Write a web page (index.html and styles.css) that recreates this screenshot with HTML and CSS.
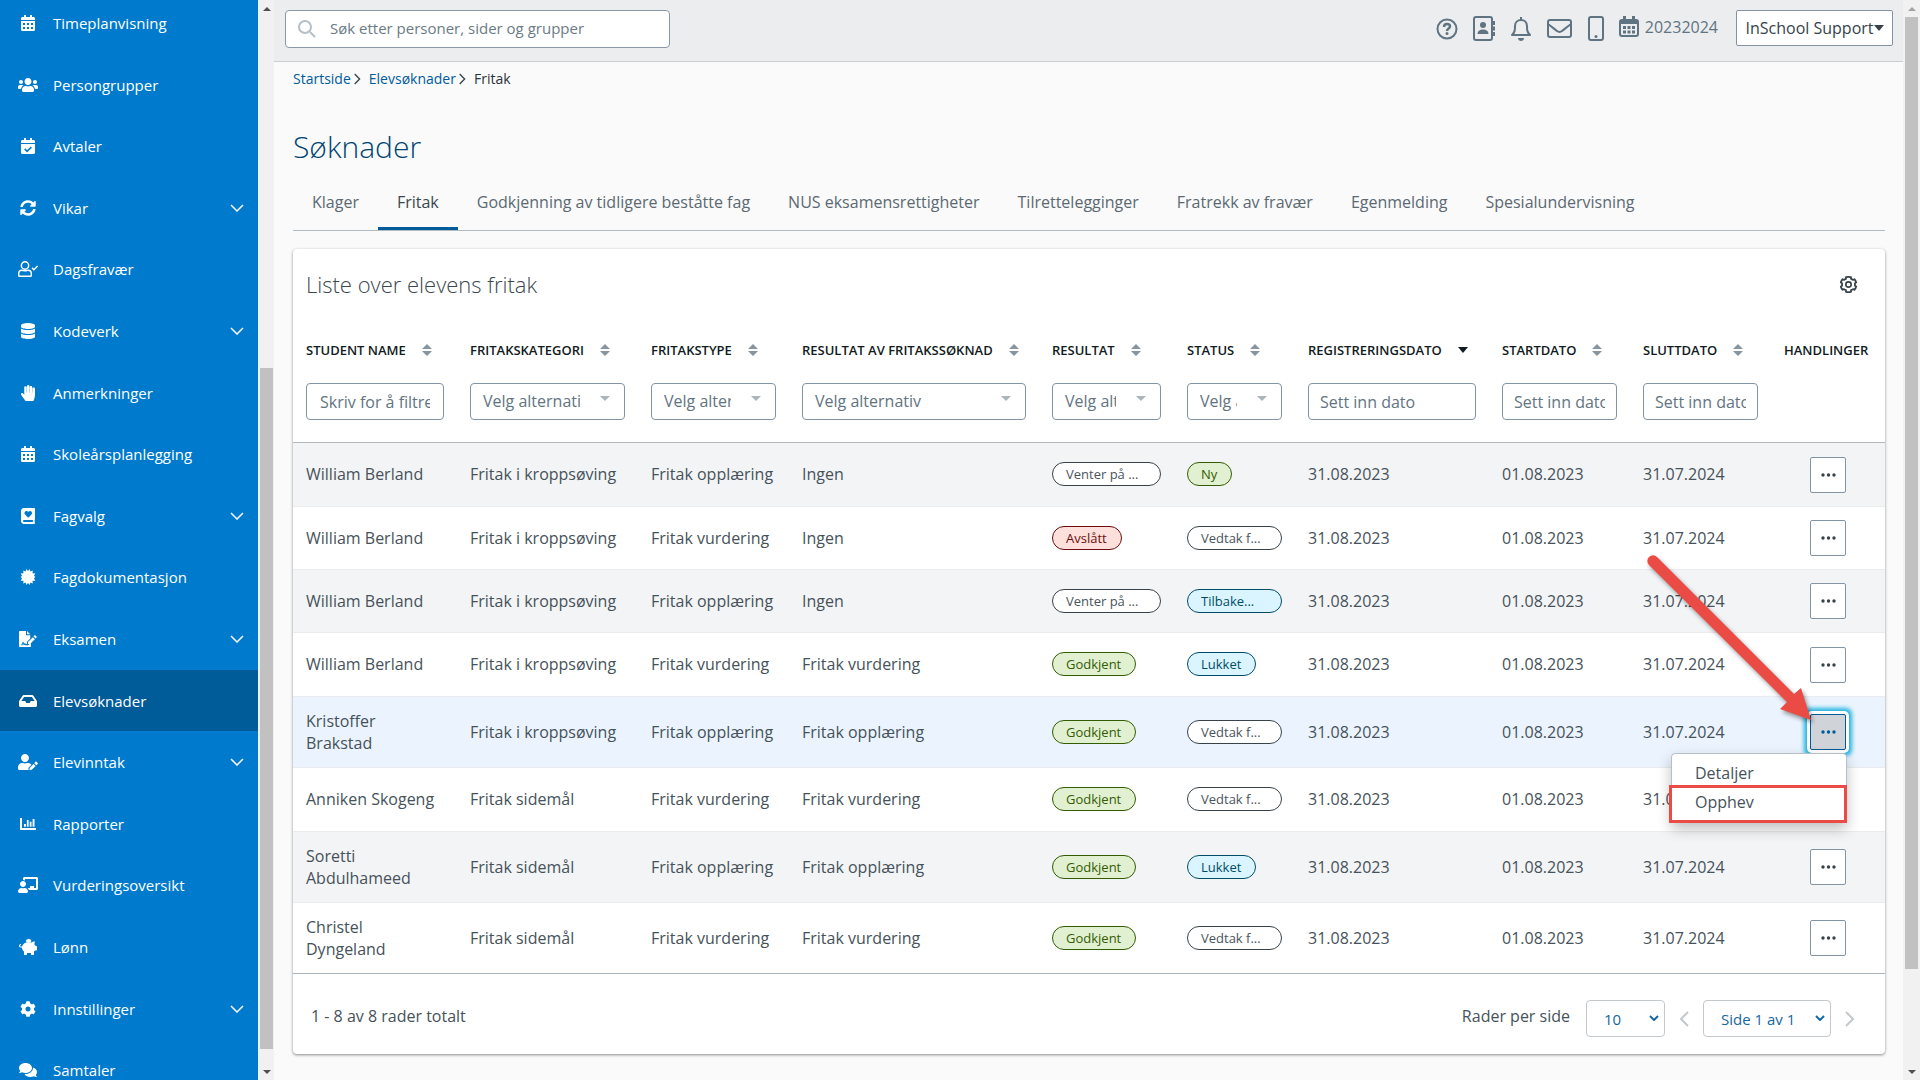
FILE: index.html
```html
<!DOCTYPE html>
<html lang="no">
<head>
<meta charset="utf-8">
<meta name="viewport" content="width=device-width, initial-scale=1">
<title>Søknader – Fritak</title>
<link rel="stylesheet" href="styles.css">
</head>
<body>
<svg class="sprite" aria-hidden="true">
  <symbol id="i-calendar" viewBox="0 0 448 512"><path fill-rule="evenodd" d="M0 464c0 26.500 21.500 48 48 48h352c26.500 0 48-21.500 48-48V192H0zM64 256h64v64H64zm128 0h64v64h-64zm128 0h64v64h-64zM64 384h64v64H64zm128 0h64v64h-64zm128 0h64v64h-64zM400 64h-48V16c0-9-7-16-16-16h-32c-9 0-16 7-16 16v48H160V16c0-9-7-16-16-16h-32c-9 0-16 7-16 16v48H48C21 64 0 85 0 112v48h448v-48c0-27-21-48-48-48z"/></symbol>
  <symbol id="i-users" viewBox="0 0 640 512"><path d="M96 224c35.300 0 64-28.700 64-64s-28.700-64-64-64-64 28.700-64 64 28.700 64 64 64zm448 0c35.300 0 64-28.700 64-64s-28.700-64-64-64-64 28.700-64 64 28.700 64 64 64zm32 32h-64c-17.600 0-33.500 7.100-45.100 18.600 40.300 22.100 68.900 62 75.100 109.400h66c17.700 0 32-14.300 32-32v-32c0-35.300-28.700-64-64-64zm-256 0c61.900 0 112-50.100 112-112S381.900 32 320 32 208 82.100 208 144s50.100 112 112 112zm76.800 32h-8.300c-20.800 10-43.900 16-68.500 16s-47.600-6-68.500-16h-8.300C179.600 288 128 339.600 128 403.200V432c0 26.500 21.500 48 48 48h288c26.500 0 48-21.500 48-48v-28.800c0-63.600-51.600-115.200-115.200-115.200zm-223.700-13.400C161.500 263.100 145.600 256 128 256H64c-35.300 0-64 28.700-64 64v32c0 17.700 14.300 32 32 32h65.900c6.300-47.400 34.900-87.300 75.200-109.400z"/></symbol>
  <symbol id="i-calcheck" viewBox="0 0 448 512"><path d="M0 464c0 26 22 48 48 48h352c26 0 48-22 48-48V192H0zM400 64h-48V16c0-9-7-16-16-16h-32c-9 0-16 7-16 16v48H160V16c0-9-7-16-16-16h-32c-9 0-16 7-16 16v48H48C21 64 0 85 0 112v48h448v-48c0-27-21-48-48-48z"/><path d="M120 350l75 75 135-135" fill="none" stroke="#007acc" stroke-width="52"/></symbol>
  <symbol id="i-sync" viewBox="0 0 512 512"><path d="M370.720 133.280C339.458 104.008 298.888 87.962 255.848 88c-77.458.068-144.328 53.178-162.791 126.850-1.344 5.363-6.122 9.150-11.651 9.150H24.103c-7.498 0-13.194-6.807-11.807-14.176C33.933 94.924 134.813 8 256 8c66.448 0 126.791 26.136 171.315 68.685L463.030 40.970C478.149 25.851 504 36.559 504 57.941V192c0 13.255-10.745 24-24 24H345.941c-21.382 0-32.090-25.851-16.971-40.971l41.750-41.749zM32 296h134.059c21.382 0 32.090 25.851 16.971 40.971l-41.750 41.750c31.262 29.273 71.835 45.319 114.876 45.280 77.418-.07 144.315-53.144 162.787-126.849 1.344-5.363 6.122-9.150 11.651-9.150h57.304c7.498 0 13.194 6.807 11.807 14.176C478.067 417.076 377.187 504 256 504c-66.448 0-126.791-26.136-171.315-68.685L48.970 471.030C33.851 486.149 8 475.441 8 454.059V320c0-13.255 10.745-24 24-24z"/></symbol>
  <symbol id="i-usercheck" viewBox="0 0 640 512"><g fill="none" stroke="currentColor" stroke-width="46"><circle cx="224" cy="144" r="118"/><path d="M128 296c-60 0-105 48-105 104v62c0 14 10 27 27 27h348c17 0 27-13 27-27v-62c0-56-45-104-105-104-30 0-50 16-96 16s-66-16-96-16z"/><path d="M450 220l60 60 116-124"/></g></symbol>
  <symbol id="i-database" viewBox="0 0 448 512"><path d="M448 73v46c0 40-100 73-224 73S0 159 0 119V73C0 33 100 0 224 0s224 33 224 73zM448 176v103c0 40-100 73-224 73S0 319 0 279V176c48 33 136 49 224 49s176-16 224-49zm0 160v103c0 40-100 73-224 73S0 479 0 439V336c48 33 136 49 224 49s176-16 224-49z"/></symbol>
  <symbol id="i-hand" viewBox="0 0 448 512"><path d="M408 80c-22 0-40 18-40 41v127h-8V73c0-23-18-41-40-41s-40 18-40 41v175h-8V42c0-23-18-42-40-42s-40 19-40 42v206h-8V83c0-23-18-41-40-41s-40 18-40 41v233l-31-44c-13-18-38-22-56-9s-22 39-9 57l124 174c8 11 20 18 34 18h208c20 0 37-14 41-33l26-115c4-13 7-27 7-41V121c0-23-18-41-40-41z"/></symbol>
  <symbol id="i-book" viewBox="0 0 448 512"><path fill-rule="evenodd" d="M448 360V24c0-13-11-24-24-24H96C43 0 0 43 0 96v320c0 53 43 96 96 96h328c13 0 24-11 24-24v-16c0-8-4-14-9-18-4-16-4-60 0-75 5-4 9-11 9-19zM134 109c26-22 64-18 88 6l10 10 9-10c24-24 63-28 89-6 30 25 31 70 5 97l-92 95c-6 6-16 6-22 0l-92-95c-26-27-25-72 5-97zM381 448H96c-42 0-42-64 0-64h285c-2 17-2 47 0 64z"/></symbol>
  <symbol id="i-cert" viewBox="0 0 512 512"><path d="M256 62L311 0l20 82 79-32-10 88 92 2-46 78 46 38-46 38 46 78-92 2 10 88-79-32-20 82-55-62-55 62-20-82-79 32 10-88-92-2 46-78-46-38 46-38-46-78 92-2-10-88 79 32L201 0z"/></symbol>
  <symbol id="i-sign" viewBox="0 0 576 512"><path d="M24 0h200v136h136v100L256 340v76h-34c-12-28-42-32-60-14l-16-46c-5-14-28-14-32 0l-22 66H70v30h40l20-50 16 42c4 10 20 12 24 2 8-14 26-8 28 12h98l88-80v110c0 13-11 24-24 24H24c-13 0-24-11-24-24V24C0 11 11 0 24 0zm232 0l104 104H256z"/><path d="M288 353v63h63l156-156-63-63zM560 174l-31-31c-13-12-30-12-42 0l-26 27 68 69 31-27c9-10 9-28 0-38z"/></symbol>
  <symbol id="i-inbox" viewBox="0 0 576 512"><path fill-rule="evenodd" d="M568 244L462 85c-9-13-24-21-40-21H154c-16 0-31 8-40 21L8 244c-5 8-8 17-8 27v129c0 27 21 48 48 48h480c27 0 48-21 48-48V271c0-10-3-19-8-27zM162 128h252l85 128H376l-32 64H232l-32-64H77z"/></symbol>
  <symbol id="i-useredit" viewBox="0 0 640 512"><path d="M224 256c71 0 128-57 128-128S295 0 224 0 96 57 96 128s57 128 128 128zm90 32h-17c-44 21-102 21-146 0h-17C60 288 0 348 0 422v42c0 27 22 48 48 48h286l6-78 92-92c-24-32-68-54-118-54zM376 440l-8 64c-1 5 3 9 8 8l66-8 122-122-66-64zM630 286l-40-38c-10-10-26-10-36 0l-32 46 64 64 44-36c10-10 10-26 0-36z"/></symbol>
  <symbol id="i-chart" viewBox="0 0 512 512"><path d="M0 64h64v320h448v64H24c-13 0-24-11-24-24zM128 256h60v84h-60zM220 128h56v212h-56zM312 186h56v154h-56zM404 92h60v248h-60z"/></symbol>
  <symbol id="i-teacher" viewBox="0 0 640 512"><path d="M208 352c-36 14-58 14-96 0C50 352 0 403 0 466c0 26 21 46 46 46h228c25 0 46-20 46-46 0-63-50-114-112-114zm-48-32c53 0 96-43 96-96s-43-96-96-96-96 43-96 96 43 96 96 96z"/><path d="M592 0H208c-26 0-48 22-48 49v47c24 0 45 6 64 17V64h352v288h-64v-64H384v64h-76c20 17 34 39 42 64h242c26 0 48-22 48-49V49c0-27-22-49-48-49z"/></symbol>
  <symbol id="i-pig" viewBox="0 0 576 512"><ellipse cx="308" cy="62" rx="88" ry="62"/><path d="M560 224h-30c-9-22-23-41-40-57l22-87h-32c-29 0-55 14-73 35-8-1-15-3-23-3H256c-77 0-142 55-157 128H56c-15 0-27-14-23-29 2-11 13-19 25-19 3 0 6-3 6-6v-20c0-3-3-6-6-6-28 0-54 20-58 48-5 34 22 64 56 64h40c0 52 25 98 64 128v96c0 9 7 16 16 16h64c9 0 16-7 16-16v-48h128v48c0 9 7 16 16 16h64c9 0 16-7 16-16v-96c12-9 22-20 31-32h49c9 0 16-7 16-16V240c0-9-7-16-16-16z"/></symbol>
  <symbol id="i-cog" viewBox="0 0 512 512"><path fill-rule="evenodd" d="M487 316l-42-25c4-23 4-47 0-70l42-25c5-3 7-8 6-14-11-35-30-67-55-94-4-4-10-5-15-2l-42 24c-18-15-39-27-61-35V26c0-6-4-11-9-12-37-8-75-8-110 0-5 1-9 6-9 12v49c-22 8-43 20-61 35L89 86c-5-3-11-2-15 2-25 27-44 59-55 94-2 6 0 12 5 14l43 25c-4 23-4 47 0 70l-43 25c-4 3-7 8-5 14 11 35 30 67 55 94 4 4 10 5 15 2l42-24c18 15 39 27 61 35v49c0 6 4 11 9 12 37 8 75 8 110 0 5-1 9-6 9-12v-49c22-8 43-20 61-35l42 24c5 3 11 2 15-2 25-27 44-59 55-94 1-6-1-11-6-14zM256 336a80 80 0 1 1 0-160 80 80 0 0 1 0 160z"/></symbol>
  <symbol id="i-chat" viewBox="0 0 576 512"><path d="M416 192c0-88-93-160-208-160S0 104 0 192c0 34 14 66 38 92-13 30-36 54-36 54-5 6-2 14 6 14 37 0 67-12 89-25 32 16 70 25 111 25 115 0 208-72 208-160zm122 220c24-26 38-58 38-92 0-67-53-124-129-148 1 7 1 13 1 20 0 106-108 192-240 192-11 0-21-1-32-2 32 58 106 98 192 98 41 0 79-9 111-25 22 13 52 25 89 25 7 0 11-9 6-14 0 0-23-24-36-54z"/></symbol>
  <symbol id="i-down" viewBox="0 0 14 8"><path d="M1 1l6 6 6-6" fill="none" stroke="currentColor" stroke-width="1.500"/></symbol>
  <symbol id="i-sort" viewBox="0 0 10 12"><path d="M5 0l5 5H0zM5 12l5-5H0z"/></symbol>
  <symbol id="i-caret" viewBox="0 0 10 6"><path d="M0 0h10L5 6z"/></symbol>
  <symbol id="i-dots" viewBox="0 0 15 4"><circle cx="2" cy="2" r="1.700"/><circle cx="7.500" cy="2" r="1.700"/><circle cx="13" cy="2" r="1.700"/></symbol>
  <symbol id="i-next" viewBox="0 0 10 16"><path d="M1 1l7 7-7 7" fill="none" stroke="currentColor" stroke-width="2"/></symbol>
  <symbol id="i-prev" viewBox="0 0 10 16"><path d="M9 1L2 8l7 7" fill="none" stroke="currentColor" stroke-width="2"/></symbol>
</svg>

<div class="app">
  <nav class="sidebar" aria-label="Hovedmeny">
    <ul class="menu">
      <li><a href="#"><svg><use href="#i-calendar"/></svg>Timeplanvisning</a></li>
      <li><a href="#"><svg><use href="#i-users"/></svg>Persongrupper</a></li>
      <li><a href="#"><svg><use href="#i-calcheck"/></svg>Avtaler</a></li>
      <li><a href="#"><svg><use href="#i-sync"/></svg>Vikar<svg class="chev"><use href="#i-down"/></svg></a></li>
      <li><a href="#"><svg><use href="#i-usercheck"/></svg>Dagsfravær</a></li>
      <li><a href="#"><svg><use href="#i-database"/></svg>Kodeverk<svg class="chev"><use href="#i-down"/></svg></a></li>
      <li><a href="#"><svg><use href="#i-hand"/></svg>Anmerkninger</a></li>
      <li><a href="#"><svg><use href="#i-calendar"/></svg>Skoleårsplanlegging</a></li>
      <li><a href="#"><svg><use href="#i-book"/></svg>Fagvalg<svg class="chev"><use href="#i-down"/></svg></a></li>
      <li><a href="#"><svg><use href="#i-cert"/></svg>Fagdokumentasjon</a></li>
      <li><a href="#"><svg><use href="#i-sign"/></svg>Eksamen<svg class="chev"><use href="#i-down"/></svg></a></li>
      <li><a class="current" href="#"><svg><use href="#i-inbox"/></svg>Elevsøknader</a></li>
      <li><a href="#"><svg><use href="#i-useredit"/></svg>Elevinntak<svg class="chev"><use href="#i-down"/></svg></a></li>
      <li><a href="#"><svg><use href="#i-chart"/></svg>Rapporter</a></li>
      <li><a href="#"><svg><use href="#i-teacher"/></svg>Vurderingsoversikt</a></li>
      <li><a href="#"><svg><use href="#i-pig"/></svg>Lønn</a></li>
      <li><a href="#"><svg><use href="#i-cog"/></svg>Innstillinger<svg class="chev"><use href="#i-down"/></svg></a></li>
      <li><a href="#"><svg><use href="#i-chat"/></svg>Samtaler</a></li>
    </ul>
  </nav>
  <div class="scrollbar scrollbar--menu" aria-hidden="true"><i class="up"></i><div class="track"><b></b></div><i class="dn"></i></div>

  <div class="page">
    <header class="topbar">
      <label class="search">
        <svg viewBox="0 0 18 18"><circle cx="7" cy="7" r="6" fill="none" stroke="currentColor" stroke-width="2"/><path d="M12 12l5 5" stroke="currentColor" stroke-width="2"/></svg>
        <input type="search" aria-label="Søk" placeholder="Søk etter personer, sider og grupper">
      </label>
      <div class="tools">
        <a href="#" aria-label="Hjelp"><svg width="22" height="22" viewBox="0 0 22 22"><g fill="none" stroke="currentColor" stroke-width="2"><circle cx="11" cy="11" r="9.500"/><path d="M8 9c0-2 1-3 3-3s3 1 3 2.500c0 2-3 2-3 4.500" stroke-width="2.500"/></g><circle cx="11" cy="15.500" r="1.500"/></svg></a>
        <a href="#" aria-label="Kontakter"><svg width="22" height="26" viewBox="0 0 22 26"><rect x="1" y="1" width="18" height="23" rx="2" fill="none" stroke="currentColor" stroke-width="2"/><circle cx="10" cy="9" r="3"/><path d="M4.500 18c0-3 2-4.500 5.500-4.500s5.500 1.500 5.500 4.500zM20 5h2v4h-2zM20 10.500h2v4h-2zM20 16h2v4h-2z"/></svg></a>
        <a href="#" aria-label="Varsler"><svg width="22" height="26" viewBox="0 0 22 26"><path d="M2 19c3-3 3-5 3-9 0-4 3-6 6-6s6 2 6 6c0 4 0 6 3 9zM11 1v3" fill="none" stroke="currentColor" stroke-width="2" stroke-linejoin="round"/><path d="M8 22h6c0 4-6 4-6 0z"/></svg></a>
        <a href="#" aria-label="Meldinger"><svg width="26" height="20" viewBox="0 0 26 20"><g fill="none" stroke="currentColor" stroke-width="2"><rect x="1" y="1" width="23" height="17" rx="2"/><path d="M1 5c4 3 7 5.500 9 7 2 1.500 3 1.500 5 0s5-4 9-7"/></g></svg></a>
        <a href="#" aria-label="Mobil"><svg width="16" height="26" viewBox="0 0 16 26"><rect x="1" y="1" width="14" height="23" rx="2" fill="none" stroke="currentColor" stroke-width="2"/><circle cx="8" cy="20.500" r="1.500"/></svg></a>
      </div>
      <a class="year" href="#"><svg width="20" height="22" viewBox="0 0 20 22"><rect x="1" y="4" width="18" height="16" rx="2" fill="none" stroke="currentColor" stroke-width="2"/><path d="M1 4h18v4H1zM4 0h3v4H4zM13 0h3v4h-3zM4 10h3v3H4zM8.500 10h3v3h-3zM13 10h3v3h-3zM4 14.500h3v3H4zM8.500 14.500h3v3h-3zM13 14.500h3v3h-3z"/></svg><span>20232024</span></a>
      <button class="user" type="button">InSchool Support<svg><use href="#i-caret"/></svg></button>
    </header>

    <main class="content">
      <nav class="crumbs" aria-label="Brødsmulesti"><a href="#">Startside</a><svg><use href="#i-next"/></svg><a href="#">Elevsøknader</a><svg><use href="#i-next"/></svg><span>Fritak</span></nav>
      <h1>Søknader</h1>
      <nav class="tabs" aria-label="Søknadstyper">
        <a href="#">Klager</a><a class="on" href="#">Fritak</a><a href="#">Godkjenning av tidligere beståtte fag</a><a href="#">NUS eksamensrettigheter</a><a href="#">Tilrettelegginger</a><a href="#">Fratrekk av fravær</a><a href="#">Egenmelding</a><a href="#">Spesialundervisning</a>
      </nav>

      <section class="card">
        <div class="card-head">
          <h2>Liste over elevens fritak</h2>
          <button class="gear" type="button" aria-label="Innstillinger"><svg viewBox="0 0 512 512"><path d="M464 308l-36-21c4-21 4-41 0-62l36-21c-10-36-26-66-49-92l-37 21c-16-14-33-24-54-31V60c-45-10-91-10-136 0v42c-21 7-38 17-54 31L97 112c-23 26-39 56-49 92l36 21c-4 21-4 41 0 62l-36 21c10 36 26 66 49 92l37-21c16 14 33 24 54 31v42c45 10 91 10 136 0v-42c21-7 38-17 54-31l37 21c23-26 39-56 49-92z" fill="none" stroke="currentColor" stroke-width="48" stroke-linejoin="round"/><circle cx="256" cy="256" r="72" fill="none" stroke="currentColor" stroke-width="44"/></svg></button>
        </div>
        <table>
          <colgroup><col class="c1"><col class="c2"><col class="c3"><col class="c4"><col class="c5"><col class="c6"><col class="c7"><col class="c8"><col class="c8"><col class="c10"></colgroup>
          <thead>
            <tr class="names">
              <th scope="col"><span>STUDENT NAME<svg><use href="#i-sort"/></svg></span></th>
              <th scope="col"><span>FRITAKSKATEGORI<svg><use href="#i-sort"/></svg></span></th>
              <th scope="col"><span>FRITAKSTYPE<svg><use href="#i-sort"/></svg></span></th>
              <th scope="col"><span>RESULTAT AV FRITAKSSØKNAD<svg><use href="#i-sort"/></svg></span></th>
              <th scope="col"><span>RESULTAT<svg><use href="#i-sort"/></svg></span></th>
              <th scope="col"><span>STATUS<svg><use href="#i-sort"/></svg></span></th>
              <th scope="col" aria-sort="descending"><span>REGISTRERINGSDATO<svg class="sorted"><use href="#i-caret"/></svg></span></th>
              <th scope="col"><span>STARTDATO<svg><use href="#i-sort"/></svg></span></th>
              <th scope="col"><span>SLUTTDATO<svg><use href="#i-sort"/></svg></span></th>
              <th scope="col"><span>HANDLINGER</span></th>
            </tr>
            <tr class="filters">
              <td><input type="text" aria-label="Filtrer navn" placeholder="Skriv for å filtrere"></td>
              <td><div class="pick"><select aria-label="Fritakskategori"><option>Velg alternativ</option></select></div></td>
              <td><div class="pick"><select aria-label="Fritakstype"><option>Velg alternativ</option></select></div></td>
              <td><div class="pick"><select aria-label="Resultat av fritakssøknad"><option>Velg alternativ</option></select></div></td>
              <td><div class="pick"><select aria-label="Resultat"><option>Velg alternativ</option></select></div></td>
              <td><div class="pick"><select aria-label="Status"><option>Velg alternativ</option></select></div></td>
              <td><input class="date" type="text" aria-label="Registreringsdato" placeholder="Sett inn dato"></td>
              <td><input class="date" type="text" aria-label="Startdato" placeholder="Sett inn dato"></td>
              <td><input class="date" type="text" aria-label="Sluttdato" placeholder="Sett inn dato"></td>
              <td></td>
            </tr>
          </thead>
          <tbody>
            <tr><td>William Berland</td><td>Fritak i kroppsøving</td><td>Fritak opplæring</td><td>Ingen</td><td><span class="pill wide">Venter på ...</span></td><td><span class="pill green">Ny</span></td><td>31.08.2023</td><td>01.08.2023</td><td>31.07.2024</td><td class="act"><button class="more" type="button" aria-label="Handlinger"><svg><use href="#i-dots"/></svg></button></td></tr>
            <tr><td>William Berland</td><td>Fritak i kroppsøving</td><td>Fritak vurdering</td><td>Ingen</td><td><span class="pill red">Avslått</span></td><td><span class="pill wide">Vedtak f...</span></td><td>31.08.2023</td><td>01.08.2023</td><td>31.07.2024</td><td class="act"><button class="more" type="button" aria-label="Handlinger"><svg><use href="#i-dots"/></svg></button></td></tr>
            <tr><td>William Berland</td><td>Fritak i kroppsøving</td><td>Fritak opplæring</td><td>Ingen</td><td><span class="pill wide">Venter på ...</span></td><td><span class="pill blue wide">Tilbake...</span></td><td>31.08.2023</td><td>01.08.2023</td><td>31.07.2024</td><td class="act"><button class="more" type="button" aria-label="Handlinger"><svg><use href="#i-dots"/></svg></button></td></tr>
            <tr><td>William Berland</td><td>Fritak i kroppsøving</td><td>Fritak vurdering</td><td>Fritak vurdering</td><td><span class="pill green">Godkjent</span></td><td><span class="pill blue">Lukket</span></td><td>31.08.2023</td><td>01.08.2023</td><td>31.07.2024</td><td class="act"><button class="more" type="button" aria-label="Handlinger"><svg><use href="#i-dots"/></svg></button></td></tr>
            <tr class="chosen"><td>Kristoffer Brakstad</td><td>Fritak i kroppsøving</td><td>Fritak opplæring</td><td>Fritak opplæring</td><td><span class="pill green">Godkjent</span></td><td><span class="pill wide">Vedtak f...</span></td><td>31.08.2023</td><td>01.08.2023</td><td>31.07.2024</td><td class="act"><div class="anchor">
              <button class="more open" type="button" aria-label="Handlinger" aria-expanded="true"><svg><use href="#i-dots"/></svg></button>
              <div class="dropdown"><button type="button">Detaljer</button><button class="marked" type="button">Opphev</button></div>
              <svg class="arrow" viewBox="0 0 176 176" aria-hidden="true"><path d="M4 12a5 5 0 0 1 8-8l137 137 7-6 10 32-31-11 7-7z"/></svg>
            </div></td></tr>
            <tr><td>Anniken Skogeng</td><td>Fritak sidemål</td><td>Fritak vurdering</td><td>Fritak vurdering</td><td><span class="pill green">Godkjent</span></td><td><span class="pill wide">Vedtak f...</span></td><td>31.08.2023</td><td>01.08.2023</td><td>31.07.2024</td><td class="act"><button class="more" type="button" aria-label="Handlinger"><svg><use href="#i-dots"/></svg></button></td></tr>
            <tr><td>Soretti Abdulhameed</td><td>Fritak sidemål</td><td>Fritak opplæring</td><td>Fritak opplæring</td><td><span class="pill green">Godkjent</span></td><td><span class="pill blue">Lukket</span></td><td>31.08.2023</td><td>01.08.2023</td><td>31.07.2024</td><td class="act"><button class="more" type="button" aria-label="Handlinger"><svg><use href="#i-dots"/></svg></button></td></tr>
            <tr><td>Christel Dyngeland</td><td>Fritak sidemål</td><td>Fritak vurdering</td><td>Fritak vurdering</td><td><span class="pill green">Godkjent</span></td><td><span class="pill wide">Vedtak f...</span></td><td>31.08.2023</td><td>01.08.2023</td><td>31.07.2024</td><td class="act"><button class="more" type="button" aria-label="Handlinger"><svg><use href="#i-dots"/></svg></button></td></tr>
          </tbody>
        </table>
        <footer class="pager">
          <span class="total">1 - 8 av 8 rader totalt</span>
          <label for="rows">Rader per side</label>
          <div class="sel sel--rows"><select id="rows"><option>10</option></select><svg viewBox="0 0 10 6"><path d="M1 1l4 4 4-4" fill="none" stroke="currentColor" stroke-width="2"/></svg></div>
          <button type="button" aria-label="Forrige side"><svg><use href="#i-prev"/></svg></button>
          <div class="sel sel--page"><select aria-label="Side"><option>Side 1 av 1</option></select><svg viewBox="0 0 10 6"><path d="M1 1l4 4 4-4" fill="none" stroke="currentColor" stroke-width="2"/></svg></div>
          <button type="button" aria-label="Neste side"><svg><use href="#i-next"/></svg></button>
        </footer>
      </section>
    </main>
  </div>
  <div class="scrollbar scrollbar--page" aria-hidden="true"><i class="up"></i><div class="track"><b></b></div><i class="dn"></i></div>
</div>
</body>
</html>
```
FILE: styles.css
```css
* { box-sizing: border-box; }
html, body { height: 100%; margin: 0; }
body { font-family: "Open Sans", "Noto Sans", sans-serif; font-size: 16px; line-height: 22px; color: #46525a; background: #fafafa; overflow: hidden; }
a { color: inherit; text-decoration: none; }
button, input, select { font: inherit; color: inherit; margin: 0; }
svg { display: block; fill: currentColor; flex: none; }
.sprite { position: absolute; width: 0; height: 0; }
.app { display: flex; height: 100vh; }

/* side menu, scrolled partly down */
.sidebar { flex: 0 0 258px; overflow: hidden; background: #007acc; color: #fff; }
.menu { list-style: none; margin: -8px 0 0; padding: 0; }
.menu li { height: 62px; }
.menu li:nth-child(5n+2), .menu li:nth-child(5n+4) { height: 61px; }
.menu a { display: flex; align-items: center; gap: 15px; height: 100%; padding: 0 14px 0 18px; font-weight: 500; font-size: 15px; }
.menu svg { width: 20px; height: 16px; }
.menu .chev { width: 14px; height: 8px; margin-left: auto; }
.menu .current { background: #005b99; }

.scrollbar { flex: none; display: flex; flex-direction: column; background: #f1f1f1; }
.scrollbar--menu { width: 16px; padding: 0 1px 0 2px; }
.scrollbar--page { width: 17px; padding: 0 2px; }
.scrollbar i { height: 17px; display: grid; place-items: center; }
.scrollbar i::before { content: ""; border: 4px solid transparent; }
.scrollbar .up::before { border-bottom-color: #505050; border-top: 0; }
.scrollbar .dn::before { border-top-color: #505050; border-bottom: 0; }
.scrollbar--page .up::before { border-bottom-color: #a3a3a3; }
.track { flex: 1; display: flex; flex-direction: column; }
.track b { display: block; background: #c1c1c1; height: 66%; }
.scrollbar--menu .track { justify-content: flex-end; padding-bottom: 14px; }
.scrollbar--page .track b { height: 91%; }

.page { flex: 1; min-width: 0; }
.topbar { display: flex; align-items: flex-start; height: 62px; padding: 10px 10px 0 11px; background: #ecedef; border-bottom: 1px solid #c9ced3; }
.search { display: flex; align-items: center; flex: 0 0 385px; height: 38px; padding: 0 12px; gap: 14px; background: #fff; border: 1px solid #8a99a8; border-radius: 4px; color: #b5bfc6; }
.search svg { width: 18px; height: 18px; }
.search input { flex: 1; border: 0; outline: 0; padding: 0 0 2px; background: none; font-size: 15px; }
.search input::placeholder { color: #6b7b86; opacity: 1; }
.tools { display: flex; align-items: center; height: 38px; margin-left: auto; color: #5f7482; }
.tools a { margin-right: 15px; }
.year { display: flex; gap: 6px; align-items: center; height: 34px; color: #5f7482; font-weight: 500; margin-right: 18px; }
.user { display: flex; align-items: center; justify-content: center; width: 157px; height: 36px; padding: 0; background: #fff; border: 1px solid #8394a5; border-radius: 2px; font-weight: 500; color: #37424a; white-space: nowrap; }
.user svg { width: 10px; height: 6px; }

.content { padding: 0 18px 0 19px; }
.crumbs { display: flex; align-items: center; height: 34px; font-size: 14px; color: #005b99; }
.crumbs svg { width: 7px; height: 12px; margin: 0 8px 0 3px; color: #3a474f; }
.crumbs span { font-weight: 500; color: #2a343a; }
h1 { margin: 29px 0 7px; font-size: 30px; line-height: 44px; font-weight: 300; color: #004574; }
.tabs { display: flex; height: 55px; border-bottom: 1px solid #b0bac1; color: #5b6973; }
.tabs a { display: flex; align-items: center; padding: 0 19px; border-bottom: 3px solid transparent; white-space: nowrap; }
.tabs .on { border-color: #005b99; color: #3a474f; }

.card { margin-top: 18px; background: #fff; border-radius: 4px; box-shadow: 0 1px 3px rgba(0, 0, 0, .45); }
.card-head { display: flex; align-items: center; justify-content: space-between; height: 72px; padding: 0 27px 2px 13px; }
h2 { margin: 0; font-size: 22px; line-height: 30px; font-weight: 300; color: #3a474f; }
.gear { border: 0; background: none; padding: 0; color: #37424a; }
.gear svg { width: 19px; height: 19px; }

table { width: 100%; table-layout: fixed; border-collapse: separate; border-spacing: 0; }
.c1 { width: 164px; } .c2 { width: 181px; } .c3 { width: 151px; } .c4 { width: 250px; } .c5 { width: 135px; }
.c6 { width: 121px; } .c7 { width: 194px; } .c8 { width: 141px; } .c10 { width: 114px; }
th, td { padding: 0 13px; text-align: left; }
.names th { height: 58px; font-size: 13px; font-weight: 600; color: #111b22; white-space: nowrap; }
.names span { display: flex; align-items: center; gap: 16px; }
.names svg { width: 10px; height: 12px; color: #8795a0; }
.names .sorted { width: 10px; height: 6px; color: #111b22; }
.filters td { height: 64px; padding-top: 4px; padding-bottom: 22px; border-bottom: 1px solid #b0b7bd; }
.filters input, .filters select { display: block; width: 100%; height: 37px; border: 1px solid #8394a5; border-radius: 4px; background: #fff; padding: 0 13px; font-weight: 500; color: #62747f; }
.filters .date { padding: 0 11px; }
.filters input::placeholder { color: #62747f; opacity: 1; }
.pick { position: relative; }
.pick select { appearance: none; padding: 0 44px 2px 12px; }
.pick::after { content: ""; position: absolute; right: 15px; top: 13px; border: 5px solid transparent; border-top-color: #aab5bc; border-bottom: 0; }
tbody td { height: 64px; border-bottom: 1px solid #e9ebed; padding-right: 13px; padding-bottom: 1px; }
tbody td:nth-child(2), tbody td:nth-child(3) { white-space: nowrap; }
tbody tr:nth-child(2) td, tbody tr:nth-child(3) td { height: 63px; }
tbody tr:nth-child(5) td, tbody tr:nth-child(7) td, tbody tr:nth-child(8) td { height: 71px; }
tbody tr:nth-child(odd) { background: #f3f4f6; }
tbody tr.chosen { background: #ebf4fe; }
tbody tr:last-child td { border-bottom-color: #aab4bc; }
.pill { display: inline-block; height: 24px; padding: 0 14px 0 13px; border: 1px solid #37424a; border-radius: 12px; background: #fff; font-size: 13px; line-height: 22px; vertical-align: middle; white-space: nowrap; color: #4a545c; }
td > .wide { width: 100%; }
.green { background: #e2f0d2; border-color: #335c00; color: #335c00; }
.red { background: #fde0dc; border-color: #6e0d0d; color: #6e0d0d; }
.blue { background: #daf5ff; border-color: #004c66; color: #004c66; }
tbody .act { padding: 0 0 0 39px; }
.more { display: grid; place-items: center; width: 36px; height: 36px; padding: 0; background: #fff; border: 1px solid #8394a5; border-radius: 2px; color: #37424a; }
.more svg { width: 15px; height: 4px; }
.open { background: #d0d4d9; border-color: #005b99; color: #005b99; box-shadow: 0 0 0 3px #fff, 0 0 4px 6px #25b4e0; }
.anchor { position: relative; width: 36px; }
.dropdown { position: absolute; z-index: 2; top: 39px; right: -1px; width: 176px; padding-top: 4px; background: #fff; border: 1px solid #b5bfc6; border-radius: 4px; box-shadow: 0 6px 14px rgba(0, 0, 0, .25); }
.dropdown button { display: block; width: 100%; height: 30px; padding: 0 23px; border: 0; background: none; text-align: left; }
.dropdown .marked { position: relative; width: 178px; height: 38px; margin: -3px 0 -1px -3px; padding-bottom: 4px; border: 3px solid #ea4b44; }
.arrow { position: absolute; z-index: 3; width: 176px; height: 176px; left: -165px; top: -161px; fill: #ea4b44; filter: drop-shadow(2px 3px 2px rgba(0, 0, 0, .4)); pointer-events: none; }

.pager { display: flex; align-items: center; height: 80px; padding: 9px 30px 0 18px; }
.total { margin-right: auto; padding-bottom: 6px; }
.pager label { padding-bottom: 6px; margin-right: 16px; }
.sel { position: relative; height: 37px; color: #16679f; }
.sel select { appearance: none; width: 100%; height: 100%; border: 1px solid #c3c8cc; border-radius: 4px; background: #fff; padding: 0 17px; font-size: 15px; }
.sel svg { position: absolute; right: 6px; top: 15px; width: 10px; height: 6px; pointer-events: none; }
.sel--rows { width: 79px; }
.sel--page { width: 128px; }
.pager button { border: 0; background: none; padding: 0; margin: 0 14px; color: #c3c8cc; }
.pager button svg { width: 10px; height: 16px; }
.pager button:last-child { margin-right: 0; }
```
